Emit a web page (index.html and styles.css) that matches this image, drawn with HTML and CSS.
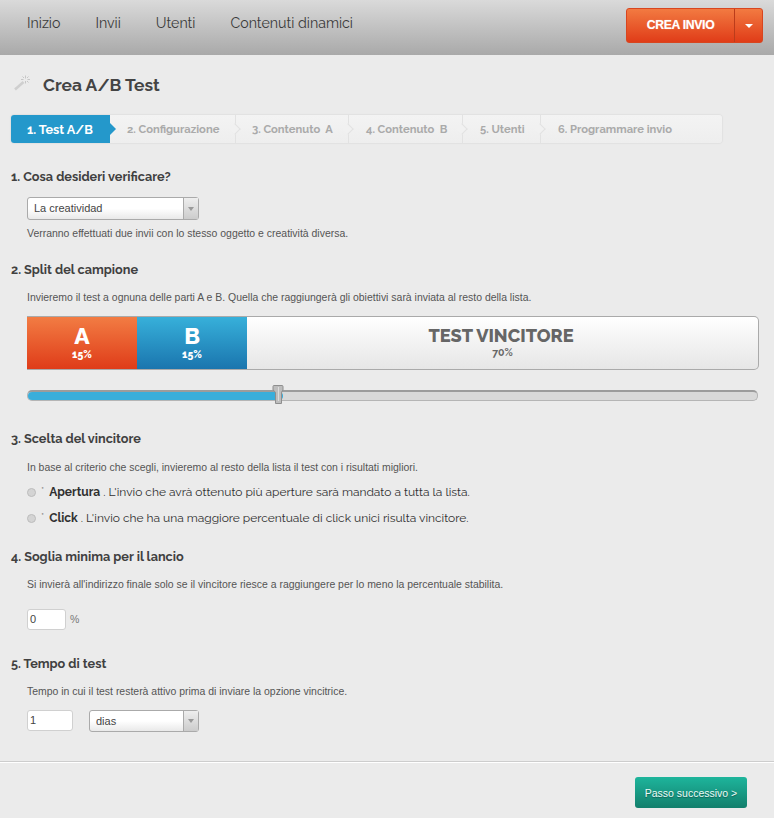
FILE: index.html
```html
<!DOCTYPE html>
<html lang="it">
<head>
<meta charset="utf-8">
<title>Crea A/B Test</title>
<link rel="stylesheet" href="styles.css">
</head>
<body>
<header class="topbar">
  <nav class="nav">
    <a class="nav-link">Inizio</a>
    <a class="nav-link">Invii</a>
    <a class="nav-link">Utenti</a>
    <a class="nav-link">Contenuti dinamici</a>
  </nav>
  <div class="create">
    <span class="create-main">CREA INVIO</span>
    <span class="create-caret"><i class="caret"></i></span>
  </div>
</header>
<main class="main">
  <div class="title-row">
    <svg class="wand" width="16" height="16" viewBox="0 0 16 16">
      <path d="M1 14.500 L9.500 7" stroke="#cfcfcf" stroke-width="2.6" fill="none"/>
      <path d="M11.500 .5v3M11.500 6v2.500M7 4.500h2.500M13.500 4.500h2.500M8.500 1.500l1.500 1.500M14.500 1.500 13 3M14.500 7.500 13 6" stroke="#c6c6c6" stroke-width="1" fill="none"/>
    </svg>
    <h1 class="title">Crea A/B Test</h1>
  </div>
  <ol class="steps">
    <li class="step step-active s1">1. Test A/B</li>
    <li class="step s2">2. Configurazione</li>
    <li class="step s3">3. Contenuto&nbsp; A</li>
    <li class="step s4">4. Contenuto&nbsp; B</li>
    <li class="step s5">5. Utenti</li>
    <li class="step s6">6. Programmare invio</li>
  </ol>

  <section class="sec sec1">
    <h2 class="sec-title">1. Cosa desideri verificare?</h2>
    <div class="sel sel-first"><span class="sel-text">La creatividad</span><span class="sel-arrow"><i class="mini-caret"></i></span></div>
    <p class="desc desc-tight">Verranno effettuati due invii con lo stesso oggetto e creatività diversa.</p>
  </section>

  <section class="sec sec2">
    <h2 class="sec-title">2. Split del campione</h2>
    <p class="desc desc-open">Invieremo il test a ognuna delle parti A e B. Quella che raggiungerà gli obiettivi sarà inviata al resto della lista.</p>
    <div class="split">
      <div class="part part-a"><b class="part-name">A</b><span class="part-pct">15%</span></div>
      <div class="part part-b"><b class="part-name">B</b><span class="part-pct">15%</span></div>
      <div class="part part-w"><b class="win-name">TEST VINCITORE</b><span class="win-pct">70%</span></div>
    </div>
    <div class="track">
      <div class="fill"></div>
      <svg class="handle" width="12" height="19" viewBox="0 0 12 19">
        <path d="M1 1.500 Q1 .5 2 .5 H10 Q11 .5 11 1.500 V5 Q9.500 6.500 9.500 8 V18.500 H3.500 V8 Q3.500 6.500 1 5Z" fill="#bdbdbd" stroke="#8e8e8e"/>
        <path d="M6.500 2v14" stroke="#dcdcdc"/>
      </svg>
    </div>
  </section>

  <section class="sec sec3">
    <h2 class="sec-title">3. Scelta del vincitore</h2>
    <p class="desc desc-wide">In base al criterio che scegli, invieremo al resto della lista il test con i risultati migliori.</p>
    <div class="radio-row radio-first"><i class="radio"></i><span class="ast">*</span><span class="radio-text"><b>Apertura</b> . L'invio che avrà ottenuto più aperture sarà mandato a tutta la lista.</span></div>
    <div class="radio-row"><i class="radio"></i><span class="ast">*</span><span class="radio-text"><b>Click</b> . L'invio che ha una maggiore percentuale di click unici risulta vincitore.</span></div>
  </section>

  <section class="sec sec4">
    <h2 class="sec-title">4. Soglia minima per il lancio</h2>
    <p class="desc desc-open">Si invierà all'indirizzo finale solo se il vincitore riesce a raggiungere per lo meno la percentuale stabilita.</p>
    <div class="field-row field-row-4"><span class="input input-s">0</span><span class="unit">%</span></div>
  </section>

  <section class="sec sec5">
    <h2 class="sec-title">5. Tempo di test</h2>
    <p class="desc desc-open">Tempo in cui il test resterà attivo prima di inviare la opzione vincitrice.</p>
    <div class="field-row field-row-5">
      <span class="input input-m">1</span>
      <div class="sel sel-days"><span class="sel-text">dias</span><span class="sel-arrow"><i class="mini-caret"></i></span></div>
    </div>
  </section>
</main>
<footer class="footer">
  <span class="next">Passo successivo &gt;</span>
</footer>
</body>
</html>
```
FILE: styles.css
```css
* { box-sizing: border-box; }
html, body { margin: 0; padding: 0; }
body {
  width: 774px;
  height: 818px;
  overflow: hidden;
  background: #ebebeb;
  font-family: "Liberation Sans", Arial, sans-serif;
  color: #444;
}
.topbar {
  height: 55px;
  background: linear-gradient(#dadada, #a9a9a9);
  display: flex;
  justify-content: space-between;
  padding: 8px 11px 0 27px;
}
.nav { display: flex; gap: 35px; padding-top: 5px; }
.nav-link { font: 400 14.200px/20px Raleway, Lato, sans-serif; color: #3a3a3a; }
.create {
  display: flex;
  height: 35px;
  color: #fff;
  border: 1px solid #d8451f;
  border-radius: 3px;
  background: linear-gradient(#f27a41, #e03c18);
}
.create-main {
  width: 107px;
  text-align: center;
  font: 700 12.200px/33px "Liberation Sans", sans-serif;
  letter-spacing: -.3px;
  text-shadow: 0 0 1px rgba(255,255,255,.5);
}
.create-caret {
  width: 28px;
  border-left: 1px solid #bb3c1b;
  display: flex;
  align-items: center;
  justify-content: center;
}
.caret {
  border: 4px solid transparent;
  border-top-color: #fff;
  border-bottom-width: 0;
}
.main { height: 706px; padding: 0 15px 0 11px; }
.title-row { display: flex; align-items: center; height: 60px; padding-left: 3px; gap: 13px; }
.wand { flex: none; margin-bottom: 4px; }
.title {
  margin: 0;
  font: 700 17.400px/22px Raleway, Lato, sans-serif;
  color: #444;
}
.steps {
  list-style: none;
  margin: 0;
  padding: 0;
  display: flex;
  width: 711px;
  height: 28px;
  background: linear-gradient(#f3f3f3, #eeeeee);
  border-radius: 3px;
  box-shadow: 0 0 2px rgba(0,0,0,.14);
}
.step {
  position: relative;
  font: 700 11.200px/29px Raleway, Lato, sans-serif;
  color: #aaa;
  padding-left: 16px;
  border-right: 1px solid #e2e2e2;
}
.step::after {
  content: "";
  position: absolute;
  right: -4px;
  top: 10px;
  width: 7px;
  height: 7px;
  background: #f1f1f1;
  border-top: 1px solid #e2e2e2;
  border-right: 1px solid #e2e2e2;
  transform: rotate(45deg);
}
.step-active {
  background: #2498cb;
  color: #fff;
  border: 0;
  border-radius: 3px 0 0 3px;
  font-size: 12.700px;
}
.step-active::after {
  right: -6px;
  top: 8px;
  width: 0;
  height: 0;
  background: none;
  border-left: 6px solid #2498cb;
  border-top: 6px solid transparent;
  border-bottom: 6px solid transparent;
  border-right: 0;
  transform: none;
}
.s1 { width: 99px; }
.s2 { width: 126px; padding-left: 17px; }
.s3 { width: 113px; }
.s4 { width: 114px; padding-left: 17px; }
.s5 { width: 78px; padding-left: 17px; }
.s6 { width: 181px; border-right: 0; padding-left: 17px; }
.s6::after { display: none; }
.sec-title {
  margin: 0;
  font: 700 12.700px/16px Raleway, Lato, sans-serif;
  color: #404040;
}
.sec1 { padding-top: 26px; }
.sec2 { padding-top: 21px; }
.sec3 { padding-top: 30px; }
.sec4 { padding-top: 18px; }
.sec5 { padding-top: 26px; }
.desc {
  margin: 0 0 0 16px;
  font-size: 10.460px;
  line-height: 14px;
  color: #555;
}
.desc-tight { margin-top: 7px; }
.desc-open { margin-top: 13px; }
.desc-wide { margin-top: 14px; }
.sel {
  display: flex;
  width: 172px;
  height: 23px;
  border: 1px solid #aaa;
  border-radius: 3px;
  background: linear-gradient(#fff 50%, #e9e9e9);
  font-size: 11px;
  line-height: 21px;
  color: #444;
}
.sel-first { margin: 12px 0 0 16px; }
.sel-text { flex: 1; padding-left: 6px; }
.sel-arrow {
  width: 15px;
  border-left: 1px solid #aaa;
  background: linear-gradient(#eee, #ccc);
  display: flex;
  align-items: center;
  justify-content: center;
}
.mini-caret {
  border: 3px solid transparent;
  border-top: 4px solid #999;
  border-bottom: 0;
}
.split {
  display: flex;
  width: 732px;
  height: 54px;
  margin: 11px 0 0 16px;
  border: 1px solid #aaa;
  border-left: 0;
  border-radius: 0 5px 5px 0;
  background: linear-gradient(#fff, #e6e6e6);
}
.part {
  display: flex;
  flex-direction: column;
  align-items: center;
  color: #fff;
  width: 110px;
  padding-top: 5px;
}
.part-a { background: linear-gradient(#f27c43, #df3c19); }
.part-b { background: linear-gradient(#37b0da, #1a75ae); }
.part-w { flex: 1; color: #666; padding: 7px 3px 0 0; }
.part-name { font: 800 23px/27px Raleway, Lato, sans-serif; }
.part-pct { font: 800 10.500px/13px Raleway, Lato, sans-serif; margin-top: -1px; }
.win-name { font: 800 18.200px/21px Raleway, Lato, sans-serif; margin-top: 1px; }
.win-pct { font: 700 10.500px/12px Raleway, Lato, sans-serif; margin-left: 3px; }
.track {
  position: relative;
  width: 731px;
  height: 11px;
  margin: 20px 0 0 16px;
  background: #d9d9d9;
  border: 1px solid #b5b5b5;
  border-top: 2px solid #9c9c9c;
  border-radius: 5px;
}
.fill {
  height: 100%;
  width: 255px;
  background: #39aedb;
  border-radius: 4px;
}
.handle {
  position: absolute;
  left: 244px;
  top: -7px;
}
.radio-row {
  display: flex;
  align-items: center;
  height: 26px;
  margin-left: 16px;
  font: 400 12px/16px Raleway, Lato, sans-serif;
  color: #303030;
}
.radio-first { margin-top: 4px; }
.radio {
  width: 9px;
  height: 9px;
  border-radius: 50%;
  background: #d4d4d4;
  border: 1px solid #bcbcbc;
  margin-right: 5px;
}
.ast { font-size: 10px; color: #666; margin: -3px 5px 0 0; }
.radio-text { letter-spacing: -.02px; }
.radio-text b { font-weight: 700; }
.field-row { display: flex; margin-left: 16px; }
.field-row-4 { margin-top: 17px; }
.field-row-5 { margin-top: 11px; gap: 16px; }
.input {
  height: 21px;
  background: #fff;
  border: 1px solid #d0d0d0;
  border-radius: 3px;
  font-size: 11px;
  line-height: 19px;
  padding-left: 2px;
  color: #444;
}
.input-s { width: 39px; }
.input-m { width: 46px; }
.unit { font-size: 10.500px; line-height: 20px; margin-left: 4px; color: #777; }
.sel-days { width: 110px; height: 22px; line-height: 20px; }
.footer {
  height: 57px;
  border-top: 1px solid #cdcdcd;
  box-shadow: inset 0 1px 0 #fff;
  display: flex;
  justify-content: flex-end;
  padding: 15px 27px 0 0;
}
.next {
  width: 112px;
  height: 31px;
  border-radius: 3px;
  background: linear-gradient(#1eb59c, #127f6c);
  color: #eafcf8;
  font-size: 10.500px;
  line-height: 32px;
  text-align: center;
  text-shadow: 0 1px 1px rgba(0,0,0,.35);
}
```
